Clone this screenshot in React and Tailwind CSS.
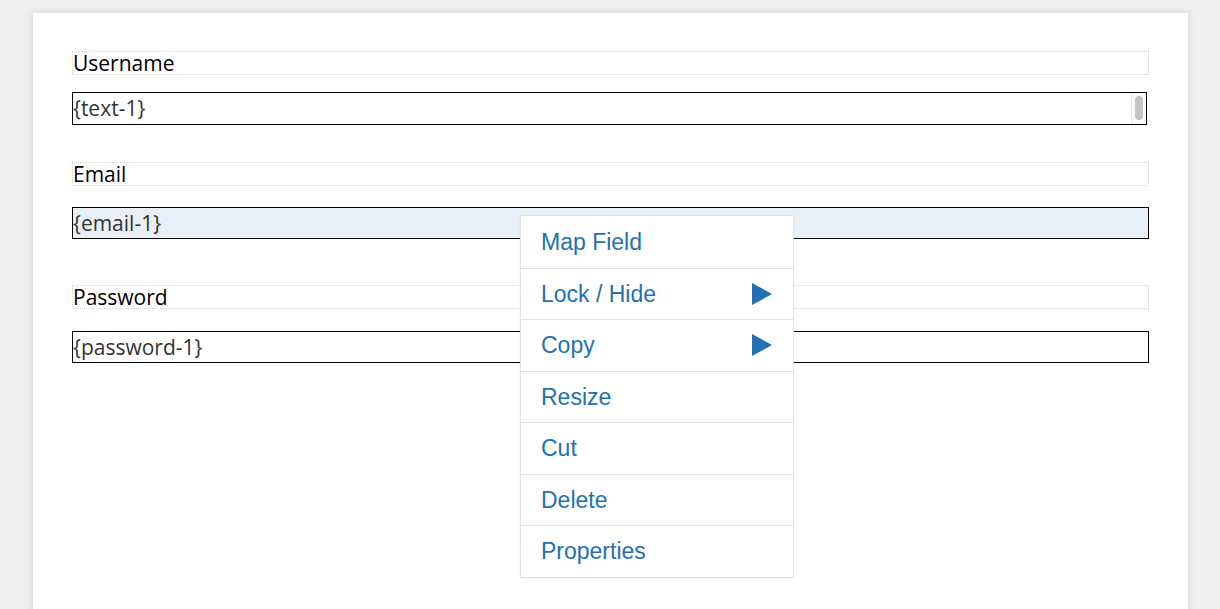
export default function App() {
  const items = [
    ["Map Field", false],
    ["Lock / Hide", true],
    ["Copy", true],
    ["Resize", false],
    ["Cut", false],
    ["Delete", false],
    ["Properties", false],
  ];
  const label = "h-[24px] border border-dotted border-[#d4d4d4] flex items-center text-[21px] text-black leading-none";
  return (
    <div className="w-[1220px] h-[609px] bg-[#efefef] overflow-hidden relative" style={{ fontFamily: '"Open Sans", sans-serif' }}>
      <div className="absolute left-[33px] top-[13px] w-[1155px] h-[620px] bg-white shadow-[0_0_8px_rgba(0,0,0,0.12)]">
        <div className="pl-[39px] pr-[39px] pt-[38px] flex flex-col">
          <div className={label}>Username</div>
          <div className="mt-[17px] h-[33px] w-[1075px] border border-black flex items-center text-[21px] text-[#333] leading-none relative">
            {"{text-1}"}
            <div className="absolute right-0 top-0 bottom-0 w-[15px] bg-[#fafafa] border-l border-[#e5e5e5] flex justify-center pt-[3px]">
              <div className="w-[8px] h-[24px] rounded bg-[#c4c4c4]" />
            </div>
          </div>
          <div className={label + " mt-[37px]"}>Email</div>
          <div className="mt-[21px] h-[32px] border border-black bg-[#e8eff6] flex items-center text-[21px] text-[#333] leading-none">{"{email-1}"}</div>
          <div className={label + " mt-[46px]"}>Password</div>
          <div className="mt-[22px] h-[32px] border border-black flex items-center text-[21px] text-[#333] leading-none">{"{password-1}"}</div>
        </div>
      </div>
      <div className="absolute left-[520px] top-[215px] w-[274px] bg-white border border-[#e2e2e2] shadow-[0_1px_3px_rgba(0,0,0,0.05)]" style={{ fontFamily: '"Liberation Sans", Arial, sans-serif' }}>
        {items.map(([t, arrow], i) => (
          <div key={t} className={"h-[51.5px] flex items-center justify-between pl-[20px] pr-[21px] text-[23px] text-[#2271b3] " + (i > 0 ? "border-t border-[#e2e2e2]" : "")}>
            <span>{t}</span>
            {arrow && (
              <svg width="20" height="22" viewBox="0 0 20 22"><polygon points="0,0 20,11 0,22" fill="#2271b3" /></svg>
            )}
          </div>
        ))}
      </div>
    </div>
  );
}
